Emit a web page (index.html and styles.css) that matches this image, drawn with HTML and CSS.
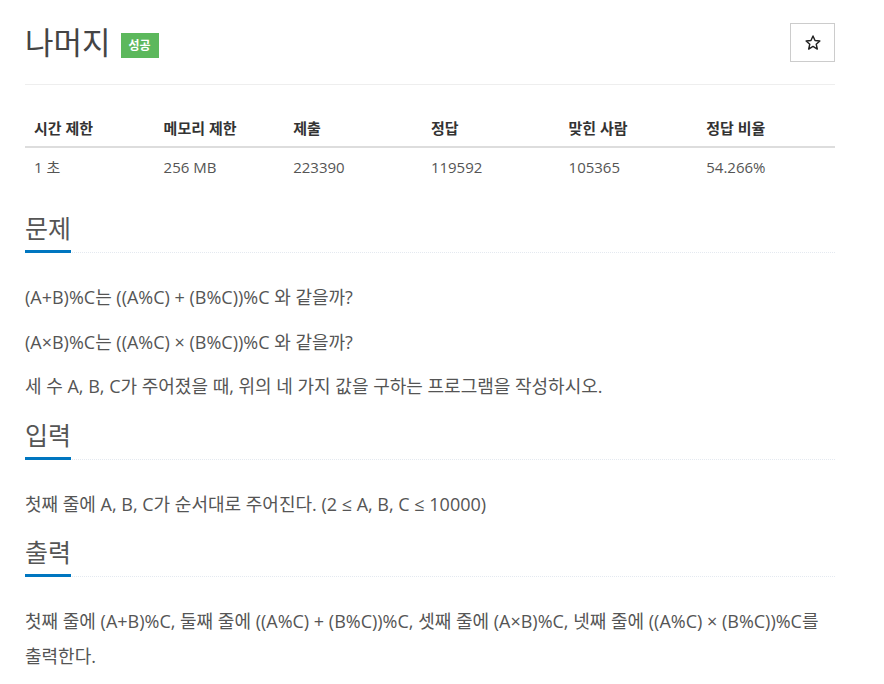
FILE: index.html
```html
<!DOCTYPE html>
<html lang="ko">
<head>
    <meta charset="UTF-8">
    <meta name="viewport" content="width=device-width, initial-scale=1.0">
    <title>나머지</title>
    <link rel="stylesheet" href="styles.css">
</head>
<body>

    <div class="page">

        <!-- Title -->
        <div class="page-header">
            <h1>
                <span class="title">나머지</span>
                <span class="label">성공</span>
            </h1>
            <button class="star" title="즐겨찾기">
                <svg width="16" height="15" viewBox="0 0 24 23">
                    <path d="M12 1.5l3.1 6.9 7.4.7-5.6 5 1.7 7.4L12 17.6l-6.6 3.9 1.7-7.4-5.6-5 7.4-.7z" fill="none" stroke="#222" stroke-width="2.2" stroke-linejoin="round"/>
                </svg>
            </button>
        </div>

        <!-- Limits -->
        <table class="info">
            <thead>
                <tr>
                    <th class="narrow">시간 제한</th>
                    <th class="narrow">메모리 제한</th>
                    <th>제출</th>
                    <th>정답</th>
                    <th>맞힌 사람</th>
                    <th>정답 비율</th>
                </tr>
            </thead>
            <tbody>
                <tr>
                    <td>1 초</td>
                    <td>256 MB</td>
                    <td>223390</td>
                    <td>119592</td>
                    <td>105365</td>
                    <td>54.266%</td>
                </tr>
            </tbody>
        </table>

        <!-- Problem -->
        <section class="problem-section">
            <div class="headline"><h2>문제</h2></div>
            <div class="problem-text">
                <p>(A+B)%C는 ((A%C) + (B%C))%C 와 같을까?</p>
                <p>(A×B)%C는 ((A%C) × (B%C))%C 와 같을까?</p>
                <p>세 수 A, B, C가 주어졌을 때, 위의 네 가지 값을 구하는 프로그램을 작성하시오.</p>
            </div>
        </section>

        <section class="problem-section">
            <div class="headline"><h2>입력</h2></div>
            <div class="problem-text">
                <p>첫째 줄에 A, B, C가 순서대로 주어진다. (2 ≤ A, B, C ≤ 10000)</p>
            </div>
        </section>

        <section class="problem-section">
            <div class="headline"><h2>출력</h2></div>
            <div class="problem-text">
                <p>첫째 줄에 (A+B)%C, 둘째 줄에 ((A%C) + (B%C))%C, 셋째 줄에 (A×B)%C, 넷째 줄에 ((A%C) × (B%C))%C를 출력한다.</p>
            </div>
        </section>

    </div>

</body>
</html>
```

FILE: styles.css
```css
body {
    margin: 0;
    font-family: "Open Sans", "Noto Sans CJK KR", sans-serif;
    color: #555;
    background-color: #fff;
}
.page {
    width: 810px;
    padding-left: 25px;
}
.page-header {
    display: flex;
    align-items: center;
    justify-content: space-between;
    padding: 23px 0 22px;
    border-bottom: 1px solid #eee;
}
.page-header h1 {
    margin: 0;
    font-size: 31px;
    font-weight: 400;
    line-height: 39px;
    color: #444;
    display: flex;
    align-items: center;
}
.label {
    margin-left: 10px;
    margin-top: 5px;
    background-color: #5cb85c;
    color: white;
    font-size: 12px;
    font-weight: bold;
    line-height: 25px;
    padding: 0 8px;
}
.star {
    width: 45px;
    height: 39px;
    background-color: #fff;
    border: 1px solid #ccc;
    display: flex;
    align-items: center;
    justify-content: center;
    padding: 0;
    cursor: pointer;
}
.info {
    width: 100%;
    border-collapse: collapse;
    margin: 25px 0 28px;
    font-size: 15px;
}
.info th {
    text-align: left;
    width: 17%;
    padding: 8px 8px 8px 9px;
    line-height: 20px;
    color: #333;
    font-weight: bold;
    border-bottom: 2px solid #ddd;
}
.info th.narrow {
    width: 16%;
}
.info td {
    padding: 9px 8px 8px 9px;
    line-height: 20px;
}
.headline {
    border-bottom: 1px dotted #e4e9f0;
}
.headline h2 {
    display: inline-block;
    margin: 0 0 -1px;
    font-size: 25px;
    font-weight: 400;
    line-height: 30px;
    padding-bottom: 7px;
    border-bottom: 3px solid #0076c0;
}
.problem-text {
    padding: 27px 0 6px;
    font-size: 18px;
}
.problem-text p {
    margin: 0 0 9.5px;
    line-height: 35px;
}
```
